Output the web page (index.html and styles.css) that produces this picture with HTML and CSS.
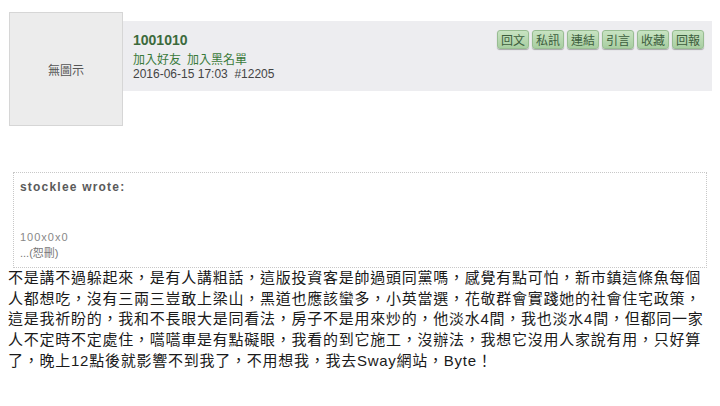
FILE: index.html
```html
<!DOCTYPE html>
<html>
<head>
<meta charset="utf-8">
<link rel="stylesheet" href="styles.css">
</head>
<body>
<div class="post-head">
  <div class="avatar">無圖示</div>
  <div class="meta">
    <div class="info">
      <div class="name">1001010</div>
      <div class="links"><a>加入好友</a><a>加入黑名單</a></div>
      <div class="date">2016-06-15 17:03 &nbsp;#12205</div>
    </div>
    <div class="buttons">
      <span class="btn">回文</span>
      <span class="btn">私訊</span>
      <span class="btn">連結</span>
      <span class="btn">引言</span>
      <span class="btn">收藏</span>
      <span class="btn">回報</span>
    </div>
  </div>
</div>
<div class="quote">
  <div class="quote-title">stocklee wrote:</div>
  <div class="quote-body">100x0x0<br><span class="cut">...(恕刪)</span></div>
</div>
<div class="content">不是講不過躲起來，是有人講粗話，這版投資客是帥過頭同黨嗎，感覺有點可怕，新市鎮這條魚每個<br>人都想吃，沒有三兩三豈敢上梁山，黑道也應該蠻多，小英當選，花敬群會實踐她的社會住宅政策，<br>這是我祈盼的，我和不長眼大是同看法，房子不是用來炒的，他淡水4間，我也淡水4間，但都同一家<br>人不定時不定處住，嚆嚆車是有點礙眼，我看的到它施工，沒辦法，我想它沒用人家說有用，只好算<br>了，晚上12點後就影響不到我了，不用想我，我去Sway網站，Byte！</div>
</body>
</html>
```
FILE: styles.css
```css
html, body {
  margin: 0;
  padding: 0;
  background: #ffffff;
  font-family: "Liberation Sans", Arial, "Noto Sans CJK TC", sans-serif;
  color: #222;
}
.post-head {
  display: flex;
  align-items: flex-start;
  padding: 12px 8px 0 9px;
}
.avatar {
  width: 114px;
  height: 114px;
  box-sizing: border-box;
  border: 1px solid #d6d6d6;
  background: #ececec;
  display: flex;
  align-items: center;
  justify-content: center;
  font-size: 12px;
  color: #555;
  font-family: "Noto Sans CJK TC", sans-serif;
}
.meta {
  flex: 1;
  margin-top: 9px;
  height: 70px;
  background: #ededf0;
  display: flex;
  justify-content: space-between;
  padding: 9px 8px 0 10px;
  box-sizing: border-box;
}
.info {
  padding-top: 1px;
}
.name {
  font-size: 14px;
  font-weight: bold;
  color: #3c6a3c;
  line-height: 18px;
}
.links {
  display: flex;
  gap: 6px;
  font-size: 12px;
  line-height: 14px;
  margin-top: 4px;
  font-family: "Liberation Sans", "Noto Sans CJK TC", sans-serif;
}
.links a { color: #3a7a3a; }
.date {
  font-size: 12px;
  line-height: 14px;
  color: #444;
}
.buttons {
  display: flex;
  gap: 3px;
}
.btn {
  display: inline-block;
  width: 32px;
  height: 19px;
  box-sizing: border-box;
  text-align: center;
  font-size: 12px;
  line-height: 17px;
  color: #3d5e3d;
  background: linear-gradient(#c8e3c2, #a8cea1);
  border: 1px solid #98bd92;
  border-radius: 3px;
  box-shadow: 0 1px 1px rgba(0,0,0,0.3);
  font-family: "Noto Sans CJK TC", sans-serif;
}
.quote {
  margin: 46px 13px 0 13px;
  border: 1px dotted #c8c8c8;
  padding: 6px 6px 6px 6px;
  width: 694px;
  box-sizing: border-box;
}
.quote-title {
  font-size: 12px;
  font-weight: bold;
  letter-spacing: 1.2px;
  color: #5a5a5a;
  line-height: 16px;
}
.quote-body {
  margin-top: 34px;
  font-size: 11px;
  line-height: 16px;
  letter-spacing: 1px;
  color: #888;
}
.quote-body .cut {
  letter-spacing: 0;
  color: #777;
}
.content {
  margin: 0 0 0 8px;
  font-size: 15px;
  line-height: 20.7px;
  letter-spacing: 0.75px;
  color: #1a1a1a;
  white-space: nowrap;
  font-family: "Liberation Sans", Arial, "Noto Sans CJK TC", sans-serif;
}
```
